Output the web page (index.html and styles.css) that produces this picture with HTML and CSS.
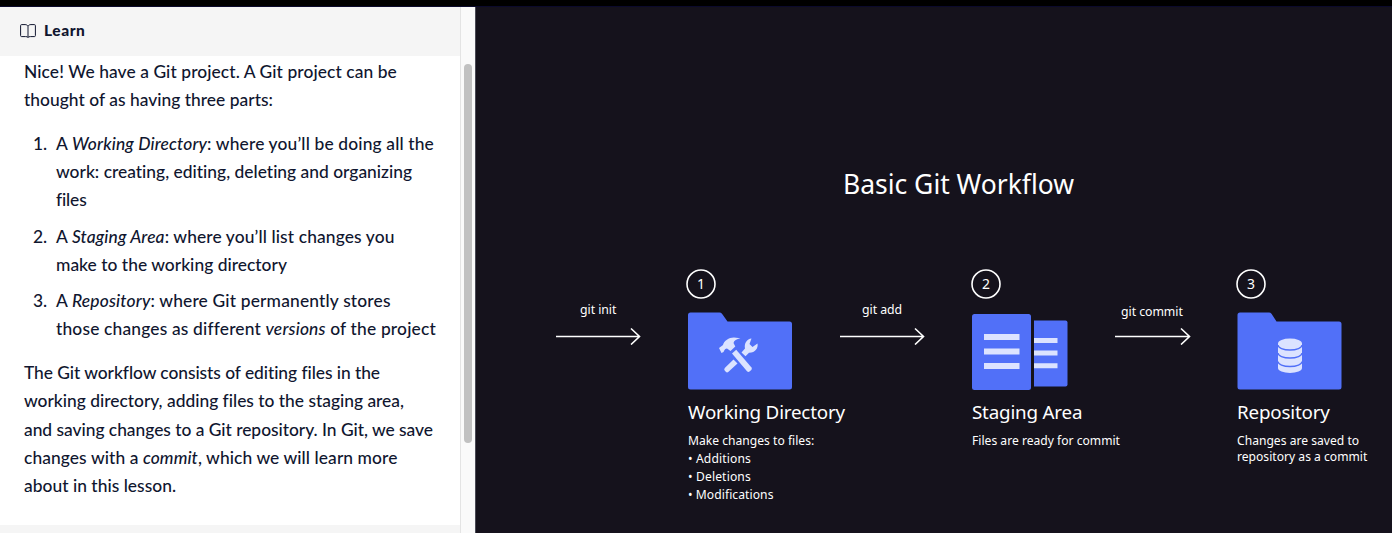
FILE: index.html
```
<!DOCTYPE html>
<html lang="en">
<head>
<meta charset="utf-8">
<title>Learn</title>
<link rel="stylesheet" href="styles.css">
</head>
<body>
<div class="topbar"></div>
<div class="workspace">
  <section class="lesson">
    <header class="lesson-head">
      <svg class="book" viewBox="0 0 16 14" width="16" height="14"><path d="M8 2.2C7.3 1 6.3.6 5 .6H1.6Q.6.6.6 1.6V11.6Q.6 12.6 1.6 12.6H5.6C6.8 12.6 7.5 12.8 8 13.5C8.500 12.8 9.200 12.6 10.4 12.6H14.400Q15.4 12.6 15.4 11.600V1.600Q15.4.6 14.4.6H11C9.700.6 8.700 1 8 2.200ZV13.200"/></svg>
      <h1 class="lesson-name">Learn</h1>
    </header>
    <div class="lesson-body">
      <p><span class="ln a1">Nice! We have a Git project. A Git project can be</span> <span class="ln a2">thought of as having three parts:</span></p>
      <ol class="parts">
        <li><span class="ln b1">A <em>Working Directory</em>: where you’ll be doing all the</span> <span class="ln b2">work: creating, editing, deleting and organizing</span> <span class="ln b3">files</span></li>
        <li><span class="ln c1">A <em>Staging Area</em>: where you’ll list changes you</span> <span class="ln c2">make to the working directory</span></li>
        <li><span class="ln d1">A <em>Repository</em>: where Git permanently stores</span> <span class="ln d2">those changes as different <em>versions</em> of the project</span></li>
      </ol>
      <p><span class="ln e1">The Git workflow consists of editing files in the</span> <span class="ln e2">working directory, adding files to the staging area,</span> <span class="ln e3">and saving changes to a Git repository. In Git, we save</span> <span class="ln e4">changes with a <em>commit</em>, which we will learn more</span> <span class="ln e5">about in this lesson.</span></p>
    </div>
    <footer class="lesson-foot"></footer>
  </section>
  <div class="gutter"><div class="thumb"></div></div>
  <main class="board">
    <h2 class="board-title">Basic Git Workflow</h2>
    <div class="flow">
      <div class="arrow"><span class="cmd">git init</span><svg width="86" height="18" viewBox="0 0 86 18"><path d="M0 9.500H83M75 1.500L83.500 9.500L75 17.500"/></svg></div>
      <div class="step">
        <svg class="num one" width="32" height="32" viewBox="0 0 32 32"><circle cx="16" cy="16" r="14"/><text x="16" y="21">1</text></svg>
        <svg class="art" width="105" height="79" viewBox="0 0 105 79"><path class="blue" d="M2.500 .5H31.500Q33 .5 34 1.700L39.500 9.500H101.500Q104 9.500 104 12V75Q104 77.500 101.500 77.500H2.500Q0 77.500 0 75V3Q0 .5 2.500 .5Z"/>
          <g class="pale" transform="translate(30 25)"><path d="M1 11L5 8C6 4 11 .5 16 .6L22.500 1.200C18.500 1.800 16 3.500 15.500 6L17.300 9.500L12.500 14L9 11.500C7.500 11.500 6.500 12.500 5.500 15L3.500 16Z"/><path d="M14 16.500L18.200 12.800L33.500 30.500Q34.500 32 33 33.300L31.500 34.600Q30.300 35.600 29 34.300Z"/><path d="M15.500 22.500L19.500 26.500L10.500 34.800Q9 36 7.800 34.800L6.800 33.700Q5.500 32.200 7 30.800Z"/><path d="M23.500 15.500L27 11.500C26 6 29 2 33.500 1.500L31.500 7L34.500 10L39.500 6.500C40.500 11 37 16 31 15.800L27.500 19.200Z"/></g></svg>
        <h3 class="name">Working Directory</h3>
        <p class="note">Make changes to files:</p>
        <ul class="bullets"><li>• Additions</li><li>• Deletions</li><li class="last">• Modifications</li></ul>
      </div>
      <div class="arrow add"><span class="cmd">git add</span><svg width="86" height="18" viewBox="0 0 86 18"><path d="M0 9.500H83M75 1.500L83.500 9.500L75 17.500"/></svg></div>
      <div class="step">
        <svg class="num" width="32" height="32" viewBox="0 0 32 32"><circle cx="16" cy="16" r="14"/><text x="16" y="21">2</text></svg>
        <svg class="art" width="105" height="79" viewBox="0 0 105 79"><rect class="blue" x="0" y="2" width="59" height="76" rx="2.500"/><path class="blue" d="M62 8.500H93.500Q95.500 8.500 95.500 10.500V72.500Q95.500 74.500 93.500 74.500H62Z"/><path class="pale" d="M12 22h35.500v6H12zM12 36.500h35.500v6H12zM12 51h35.500v6H12zM62 26h23.500v5H62zM62 38.500h23.500v5H62zM62 51.300h23.500v5H62z"/></svg>
        <h3 class="name">Staging Area</h3>
        <p class="note">Files are ready for commit</p>
      </div>
      <div class="arrow commit"><span class="cmd">git commit</span><svg width="76" height="18" viewBox="0 0 76 18"><path d="M0 9.500H74M66 1.500L74.500 9.500L66 17.500"/></svg></div>
      <div class="step">
        <svg class="num" width="32" height="32" viewBox="0 0 32 32"><circle cx="16" cy="16" r="14"/><text x="16" y="21">3</text></svg>
        <svg class="art" width="105" height="79" viewBox="0 0 105 79"><path class="blue" d="M3 .5H32Q33.500 .5 34.500 1.700L39.500 9.500H102Q104.500 9.500 104.500 12V75Q104.500 77.500 102 77.500H3Q.5 77.500 .5 75V3Q.5 .5 3 .5Z"/><path class="pale" d="M41 31.500V56A12 5 0 0 0 65 56V31.500Z"/><ellipse class="pale" cx="53" cy="31.500" rx="12" ry="5"/><path class="band" d="M41 33A12 5 0 0 0 65 33M41 41A12 5 0 0 0 65 41M41 49.500A12 5 0 0 0 65 49.500"/></svg>
        <h3 class="name">Repository</h3>
        <p class="note">Changes are saved to<br>repository as a commit</p>
      </div>
    </div>
  </main>
</div>
</body>
</html>
```
FILE: styles.css
```
* { box-sizing: border-box; }
body { margin: 0; height: 533px; overflow: hidden; display: flex; flex-direction: column; background: #fff; font-variant-ligatures: none; }
h1, h2, h3, p, ol, ul { margin: 0; padding: 0; font-weight: 400; }
.topbar { height: 7px; flex: none; background: #000; border-bottom: 1px solid #0b0a2c; }
.workspace { flex: 1; display: flex; min-height: 0; }

/* Lesson text */
.lesson { width: 460px; display: flex; flex-direction: column; color: #10162f; font-family: Lato, sans-serif; }
.lesson-head { height: 49px; flex: none; display: flex; align-items: center; gap: 8px; padding: 0 0 2px 20px; background: #f5f5f5; }
.book { fill: none; stroke: #10162f; stroke-width: 1; }
.lesson-name { font-size: 15.500px; line-height: 18px; margin-top: -1px; font-weight: 900; letter-spacing: .55px; }
.lesson-body { flex: 1; padding: 2px 0 0 24px; font-size: 17.400px; line-height: 28.040px; }
.lesson-body p, .parts { font-weight: 500; }
.ln { display: table; white-space: nowrap; }
.a1, .e4 { letter-spacing: .084px; }
.a2, .c2, .e5 { letter-spacing: .024px; }
.b1 { letter-spacing: .15px; }
.b2 { letter-spacing: .006px; }
.b3 { letter-spacing: -.15px; }
.c1 { letter-spacing: .115px; }
.d1, .d2 { letter-spacing: .166px; }
.e1 { letter-spacing: -.058px; }
.e2 { letter-spacing: -.005px; }
.e3 { letter-spacing: -.023px; }
.parts { padding-left: 32px; margin: 16px 0; }
.parts li { margin-bottom: 8.500px; }
.parts li::marker { content: counter(list-item) ".\a0\a0"; }
.lesson-foot { height: 8px; background: #f5f5f5; }

.gutter { width: 15px; background: #fafafa; border-left: 1px solid #e4e4e4; padding: 57px 0 0 3px; }
.thumb { width: 8px; height: 379px; border-radius: 4px; background: #c1c1c1; }

/* Workflow diagram */
.board { flex: 1; border-left: 1px solid #4a4a55; background: #15121c; color: #fff; font-family: "Noto Sans", sans-serif; padding-left: 80px; white-space: nowrap; }
.board-title { padding: 158px 0 0 287px; font-size: 26.500px; line-height: 38px; letter-spacing: -.02px; }
.flow { display: grid; grid-template-columns: 132px 152px 132px 143px 122px 150px; padding-top: 65px; }
.arrow { display: flex; flex-direction: column; align-items: flex-start; padding-top: 33px; }
.arrow svg { fill: none; stroke: #fff; stroke-width: 1.600; margin-top: 8px; }
.cmd { font-size: 12.300px; line-height: 18px; margin-left: 24px; letter-spacing: -.05px; }
.add .cmd { margin-left: 22px; }
.commit { padding-top: 35px; }
.commit .cmd { margin-left: 6px; }
.commit svg { margin-top: 6px; }
.step { display: flex; flex-direction: column; align-items: flex-start; }
.num { margin-left: -2px; }
.one { margin-left: -3px; }
.num circle { fill: none; stroke: #fff; stroke-width: 1.600; }
.num text { fill: #fff; font-size: 14px; text-anchor: middle; }
.art { margin-top: 12px; }
.blue { fill: #5170f8; }
.pale { fill: #dce3ff; }
.band { fill: none; stroke: #5170f8; stroke-width: 1.300; }
.name { margin-top: 8px; font-size: 18.800px; line-height: 27px; letter-spacing: -.19px; }
.note { margin-top: 7px; font-size: 12.100px; line-height: 16px; letter-spacing: .01px; }
.bullets { list-style: none; padding-top: 1px; font-size: 12.100px; line-height: 18.200px; letter-spacing: .14px; }
.last { letter-spacing: .068px; }
```
